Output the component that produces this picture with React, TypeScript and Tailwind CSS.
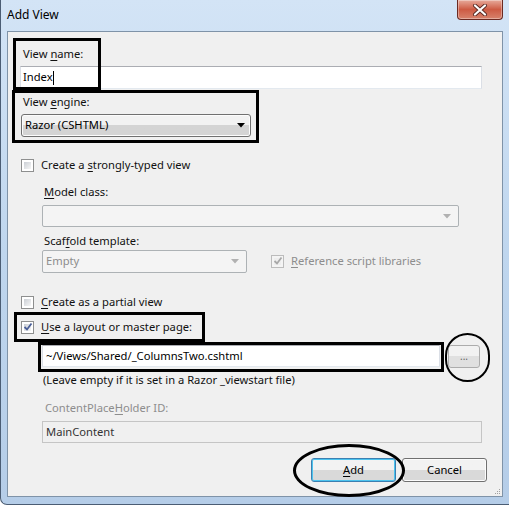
const font = { fontFamily: '"Noto Sans", "Open Sans", Arial, sans-serif' };

const CheckBox = ({ checked = false, disabled = false }: { checked?: boolean; disabled?: boolean }) => (
  <div
    className={`w-[13px] h-[13px] shrink-0 border p-[2px] ${
      disabled ? "border-[#bcbcbc] bg-[#f4f4f4]" : "border-[#8e8f8f] bg-white"
    }`}
  >
    <div
      className={`w-full h-full relative ${
        disabled ? "bg-[#eeeeee]" : "bg-gradient-to-br from-[#cbcfd5] to-[#f6f6f6]"
      }`}
    >
      {checked && (
        <svg className="absolute -left-[1px] -top-[2px]" width="10" height="10" viewBox="0 0 10 10">
          <path
            d="M1.5 5 L4 7.5 L8.5 1.5"
            fill="none"
            stroke={disabled ? "#a8a8a8" : "#4a5f97"}
            strokeWidth="1.8"
          />
        </svg>
      )}
    </div>
  </div>
);

const Arrow = ({ color = "#000" }: { color?: string }) => (
  <svg width="8" height="5" viewBox="0 0 8 5">
    <path d="M0 0 H8 L4 4.5 Z" fill={color} />
  </svg>
);

const Label = ({ children, gray = false, className = "" }: { children: React.ReactNode; gray?: boolean; className?: string }) => (
  <div className={`h-[15px] leading-[15px] flex items-center ${gray ? "text-[#8d8d8d]" : "text-[#111]"} ${className}`}>
    {children}
  </div>
);

const U = ({ children }: { children: React.ReactNode }) => (
  <span className="underline underline-offset-[2px] decoration-1">{children}</span>
);

export default function App() {
  return (
    <div
      className="w-[509px] h-[506px] relative overflow-hidden bg-white text-[11.2px]"
      style={font}
    >
      {/* window frame */}
      <div className="w-[509px] h-[505px] flex flex-col bg-gradient-to-b from-[#d3e4f6] via-[#bfd6ee] to-[#b5cde8] border-l border-b border-[#4b5d74] rounded-bl-[7px]">
        {/* title bar */}
        <div className="h-[31px] shrink-0 flex items-start">
          <div className="pl-[6px] pt-[7px] text-[12px] text-black leading-[16px]">Add View</div>
          <div className="ml-auto mr-[6px] w-[46px] h-[20px] rounded-b-[4px] border border-t-0 border-[#6b2a22] bg-gradient-to-b from-[#e6a99b] via-[#cd5a43] to-[#d7826c] flex items-center justify-center shadow-[inset_0_0_0_1px_rgba(255,255,255,0.35)]">
            <svg width="16" height="12" viewBox="0 0 16 12">
              <path d="M3 1.5 L13 10.5 M13 1.5 L3 10.5" stroke="#5a2a24" strokeWidth="4" strokeLinecap="round" />
              <path d="M3 1.5 L13 10.5 M13 1.5 L3 10.5" stroke="#ffffff" strokeWidth="2.2" strokeLinecap="round" />
            </svg>
          </div>
        </div>

        {/* client area */}
        <div className="ml-[6px] mr-[6px] h-[466px] border border-[#7f93a8] bg-[#f0f0f0] flex flex-col">
          <Label className="mt-[14px] ml-[15px]">
            View&nbsp;<U>n</U>ame:
          </Label>
          <div className="mt-[5px] ml-[12px] w-[462px] h-[23px] bg-white border border-[#abadb3] border-b-[#e3e9ef] border-x-[#dbdfe6] flex items-center pl-[2px]">
            <span>Index</span>
            <span className="w-px h-[14px] bg-black" />
          </div>

          <Label className="mt-[5px] ml-[15px]">
            View&nbsp;<U>e</U>ngine:
          </Label>
          <div className="mt-[5px] ml-[13px] w-[230px] h-[23px] rounded-[3px] border border-[#707070] bg-gradient-to-b from-[#f2f2f2] from-50% to-[#d4d4d4] to-50% flex items-center pl-[3px] pr-[5px] shadow-[inset_0_0_0_1px_#fcfcfc]">
            <span className="text-black">Razor (CSHTML)</span>
            <span className="ml-auto flex">
              <Arrow />
            </span>
          </div>

          <div className="mt-[21px] ml-[13px] h-[15px] flex items-center gap-[7px]">
            <CheckBox />
            <span className="text-[#111]">
              Create a <U>s</U>trongly-typed view
            </span>
          </div>

          <Label className="mt-[11px] ml-[36px]">
            <U>M</U>odel class:
          </Label>
          <div className="mt-[6px] ml-[34px] w-[417px] h-[22px] border border-[#adb2b5] bg-[#f4f4f4] rounded-[2px] flex items-center justify-end pr-[7px]">
            <Arrow color="#b1b1b1" />
          </div>

          <Label className="mt-[6px] ml-[36px]">
            Scaf<U>f</U>old template:
          </Label>
          <div className="mt-[2px] ml-[34px] h-[23px] flex items-center">
            <div className="w-[205px] h-[23px] border border-[#adb2b5] bg-[#f4f4f4] rounded-[2px] flex items-center pl-[3px] pr-[7px] text-[#8d8d8d]">
              <span>Empty</span>
              <span className="ml-auto flex">
                <Arrow color="#b1b1b1" />
              </span>
            </div>
            <div className="ml-[24px] flex items-center gap-[7px] text-[#8d8d8d]">
              <CheckBox checked disabled />
              <span>
                <U>R</U>eference script libraries
              </span>
            </div>
          </div>

          <div className="mt-[22px] ml-[13px] h-[15px] flex items-center gap-[7px]">
            <CheckBox />
            <span className="text-[#111]">
              <U>C</U>reate as a partial view
            </span>
          </div>

          <div className="mt-[10px] ml-[13px] h-[15px] flex items-center gap-[7px]">
            <CheckBox checked />
            <span className="text-[#111]">
              <U>U</U>se a layout or master page:
            </span>
          </div>

          <div className="mt-[10px] ml-[34px] h-[22px] flex items-center">
            <div className="w-[398px] h-[22px] bg-white border border-[#abadb3] border-b-[#e3e9ef] border-x-[#dbdfe6] flex items-center pl-[3px] text-black">
              ~/Views/Shared/_ColumnsTwo.cshtml
            </div>
            <div className="ml-[8px] w-[32px] h-[23px] rounded-[3px] border border-[#acacac] bg-gradient-to-b from-[#f2f2f2] from-50% to-[#e0e0e0] to-50% flex items-end justify-center text-[#666] text-[10px] leading-none pb-[6px]">
              ...
            </div>
          </div>

          <Label className="mt-[5px] ml-[35px]">(Leave empty if it is set in a Razor _viewstart file)</Label>

          <Label gray className="mt-[13px] ml-[37px]">
            ContentPlace<U>H</U>older ID:
          </Label>
          <div className="mt-[6px] ml-[34px] w-[440px] h-[22px] border border-[#c5c5c5] bg-[#f0f0f0] flex items-center pl-[3px] text-[#333]">
            MainContent
          </div>

          <div className="mt-[15px] flex justify-end gap-[6px] pr-[15px]">
            <div className="w-[85px] h-[24px] rounded-[3px] border border-[#3c7fb1] bg-gradient-to-b from-[#f2f2f2] from-50% to-[#d9d9d9] to-50% flex items-center justify-center text-black shadow-[inset_0_0_0_1px_#4cc3ee]">
              <U>A</U>dd
            </div>
            <div className="w-[85px] h-[24px] rounded-[3px] border border-[#707070] bg-gradient-to-b from-[#f2f2f2] from-50% to-[#d9d9d9] to-50% flex items-center justify-center text-black shadow-[inset_0_0_0_1px_#fcfcfc]">
              Cancel
            </div>
          </div>

          {/* resize grip */}
          <div className="mt-auto mb-[2px] mr-[2px] self-end grid grid-cols-3 gap-[1px]">
            {[0, 0, 1, 0, 1, 1, 1, 1, 1].map((v, i) => (
              <span key={i} className={`w-[1px] h-[1px] ${v ? "bg-[#a0a0a0]" : "bg-transparent"}`} />
            ))}
          </div>
        </div>
      </div>

      {/* annotation rectangles and ellipses drawn over the dialog */}
      <div className="absolute left-[13px] top-[38px] w-[88px] h-[52px] border-[3px] border-black pointer-events-none" />
      <div className="absolute left-[12px] top-[90px] w-[247px] h-[53px] border-[3px] border-black pointer-events-none" />
      <div className="absolute left-[14px] top-[312px] w-[191px] h-[30px] border-[3px] border-black pointer-events-none" />
      <div className="absolute left-[38px] top-[342px] w-[406px] h-[30px] border-[3px] border-black pointer-events-none" />
      <div className="absolute left-[445px] top-[333px] w-[45px] h-[49px] rounded-full border-2 border-black pointer-events-none" />
      <div className="absolute left-[293px] top-[444px] w-[112px] h-[53px] rounded-[50%] border-[3px] border-black pointer-events-none" />
    </div>
  );
}
